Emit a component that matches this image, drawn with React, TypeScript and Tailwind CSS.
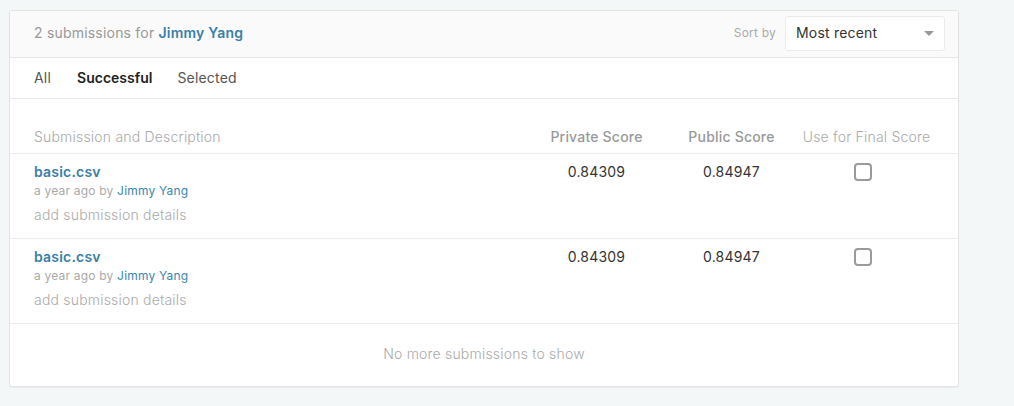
import React from "react";

const rows = [
  { name: "basic.csv", when: "a year ago", by: "Jimmy Yang", priv: "0.84309", pub: "0.84947" },
  { name: "basic.csv", when: "a year ago", by: "Jimmy Yang", priv: "0.84309", pub: "0.84947" },
];

export default function App() {
  return (
    <div
      className="w-[1014px] h-[406px] bg-[#f4f7f8] pt-[10px] pl-[9px] tracking-[0.2px]"
      style={{ fontFamily: "Inter, 'Liberation Sans', Arial, sans-serif" }}
    >
      <div className="w-[950px] bg-white border border-[#e3e3e3] rounded-[3px] overflow-hidden shadow-[0_1px_1px_rgba(0,0,0,0.04)]">
        {/* header */}
        <div className="h-[47px] bg-[#fafafa] border-b border-[#e6e6e6] flex items-center justify-between pl-[24px] pr-[13px]">
          <div className="text-[14px] text-[#999] pb-[3px]">
            2 submissions for <span className="font-semibold text-[#3a80a6]">Jimmy Yang</span>
          </div>
          <div className="flex items-center gap-[9px] pb-[1px]">
            <span className="text-[12px] text-[#aaa] pb-[2px]">Sort by</span>
            <div className="w-[160px] h-[35px] bg-white border border-[#ebebeb] rounded-[3px] flex items-center justify-between pl-[10px] pr-[10px]">
              <span className="text-[14px] text-[#333] pb-[2px]">Most recent</span>
              <svg width="10" height="5" viewBox="0 0 10 5">
                <path d="M0 0 L10 0 L5 5 Z" fill="#999" />
              </svg>
            </div>
          </div>
        </div>
        {/* tabs */}
        <div className="h-[41px] border-b border-[#e6e6e6] flex items-center pl-[24px] pb-[2px] text-[14px]">
          <span className="text-[#555]">All</span>
          <span className="ml-[26px] font-semibold text-[#222] tracking-[0px]">Successful</span>
          <span className="ml-[25px] text-[#555]">Selected</span>
        </div>
        {/* table header */}
        <div className="grid grid-cols-[1fr_135px_135px_135px] px-[24px] pt-[28px] pb-[6px] border-b border-[#ececec] text-[14px] leading-[20px]">
          <span className="text-[#aaa] font-light">Submission and Description</span>
          <span className="text-center text-[#999] font-medium">Private Score</span>
          <span className="text-center text-[#999] font-medium">Public Score</span>
          <span className="text-center text-[#aaa] font-light">Use for Final Score</span>
        </div>
        {rows.map((r, i) => (
          <div
            key={i}
            className="grid grid-cols-[1fr_135px_135px_135px] px-[24px] pt-[8px] pb-[13px] border-b border-[#ececec]"
          >
            <div className="flex flex-col">
              <span className="text-[14px] leading-[20px] font-semibold text-[#3a80a6]">{r.name}</span>
              <span className="text-[12px] leading-[18px] text-[#aaa]">
                {r.when} by <span className="text-[#3a86b0]">{r.by}</span>
              </span>
              <span className="text-[14px] leading-[20px] mt-[5px] text-[#aaa] font-light">add submission details</span>
            </div>
            <div className="text-center text-[14px] leading-[20px] text-[#333]">{r.priv}</div>
            <div className="text-center text-[14px] leading-[20px] text-[#333]">{r.pub}</div>
            <div className="flex justify-center pt-[1px] pr-[7px]">
              <div className="w-[18px] h-[18px] border-2 border-[#9a9a9a] rounded-[4px]" />
            </div>
          </div>
        ))}
        <div className="h-[62px] flex items-center justify-center pb-[4px] text-[14px] text-[#aaa] font-light">
          No more submissions to show
        </div>
      </div>
    </div>
  );
}
